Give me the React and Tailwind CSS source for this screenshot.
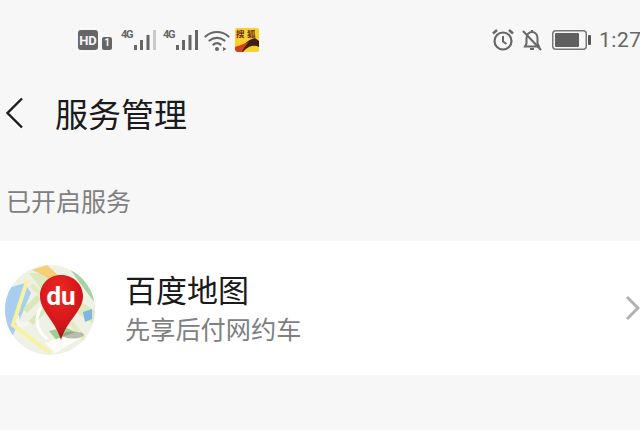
const cjk = { fontFamily: '"Noto Sans CJK SC", "Noto Sans", sans-serif' };

function Signal({ full }) {
  return (
    <svg width="35" height="26" viewBox="0 0 35 26" className="block">
      <text x="0" y="11" fontSize="11" fontWeight="700" fill="#666" fontFamily="Roboto, sans-serif" textLength="12.5">4G</text>
      <rect x="13" y="18" width="3" height="5" fill="#666" />
      <rect x="19" y="13" width="3" height="10" fill="#666" />
      <rect x="25.5" y="8" width="3" height="15" fill="#666" />
      <rect x="32" y="3" width="3" height="20" fill={full ? "#666" : "#c9c9c9"} />
    </svg>
  );
}

function MapIcon() {
  return (
    <svg width="90" height="90" viewBox="0 0 90 90" className="mt-[4px] block shrink-0">
      <defs>
        <clipPath id="c"><circle cx="45" cy="45" r="45" /></clipPath>
        <radialGradient id="r" cx="45%" cy="28%" r="75%">
          <stop offset="0" stopColor="#ee2a22" />
          <stop offset="0.65" stopColor="#d3161b" />
          <stop offset="1" stopColor="#a31016" />
        </radialGradient>
      </defs>
      <g clipPath="url(#c)">
        <rect width="90" height="90" fill="#eff1e4" />
        <path d="M0 24 L20 18 L26 28 L8 70 L0 66Z" fill="#a8cdee" />
        <path d="M10 52 L14 50 L15 58 L23 56 L24 60 L12 63Z" fill="#f4f7f0" />
        <path d="M24 8 L44 8 L72 34 L90 46 L90 60 L60 40 L36 24Z" fill="#dde9bf" />
        <path d="M27 5 L42 0 L54 11 L44 14 L38 10Z" fill="#f5d077" />
        <path d="M62 0 L90 0 L90 38 L75 18Z" fill="#a5d3a3" />
        <path d="M22 16 L8 60 L45 88" stroke="#f7f2a2" strokeWidth="4" fill="none" />
        <path d="M26 20 L58 48 L84 80" stroke="#e3eac4" strokeWidth="5" fill="none" />
        <path d="M20 46 L34 32 M26 58 L40 44" stroke="#d9e8bb" strokeWidth="6" fill="none" />
        <path d="M36 42 Q26 60 42 74" stroke="#fff" strokeWidth="3" fill="none" />
        <path d="M44 66 L60 62 L72 68 L54 78Z" fill="#9bcf93" />
        <path d="M78 47 L87 44 L87 54 L80 57Z" fill="#7fb6e4" />
        <path d="M40 78 L74 66 L78 72 L50 88Z" fill="#fdfdf8" />
        <ellipse cx="68" cy="70" rx="11" ry="3.5" fill="#8f8f82" opacity="0.6" />
      </g>
      <path d="M56 10 C43 10 35 20 35 31 C35 46 50 55 56 75 C62 55 78 46 78 31 C78 20 69 10 56 10Z" fill="url(#r)" />
      <text x="56" y="40" textAnchor="middle" fontSize="26" fontWeight="700" fill="#fff" fontFamily="Roboto, sans-serif">du</text>
    </svg>
  );
}

export default function App() {
  return (
    <div className="h-[430px] w-[640px] overflow-hidden bg-[#f7f7f7]" style={cjk}>
      <div className="flex h-[80px] items-center justify-between pl-[78px] text-[#666]">
        <div className="flex items-center">
          <div className="flex h-[20px] w-[20px] items-center justify-center rounded-[3px] bg-[#666] text-[13px] font-bold leading-none text-[#f7f7f7] font-['Roboto']">HD</div>
          <div className="ml-[4px] mt-[6px] flex h-[13px] w-[10px] items-center justify-center rounded-[2px] bg-[#666] text-[10px] font-bold leading-none text-[#f7f7f7] font-['Roboto']">1</div>
          <div className="ml-[9px]"><Signal /></div>
          <div className="ml-[7px]"><Signal full /></div>
          <svg width="26" height="24" viewBox="0 0 26 24" className="ml-[6px] block" fill="none" stroke="#666" strokeWidth="2.2" strokeLinecap="round">
            <path d="M1.5 8.5 C8 2.5 18 2.5 24.5 8.5" />
            <path d="M5.5 12.5 C10 9 16 9 20.5 12.5" />
            <path d="M9.5 16.5 C11.5 15 14.5 15 16.5 16.5" />
            <circle cx="13" cy="21" r="2" fill="#666" stroke="none" />
            <path d="M19 19 L19 23 L22.5 21Z" fill="#666" stroke="none" />
          </svg>
          <svg width="24" height="24" viewBox="0 0 24 24" className="ml-[5px] block">
            <rect width="24" height="24" rx="2" fill="#f7d22e" />
            <path d="M2 22 C8 18 13 11 20 10 L24 13 L24 19 C18 16 12 19 8 24 L3 24Z" fill="#3f1f10" />
            <path d="M0 19 L14 14 C10 18 8 21 7 24 L2 24 L0 22Z" fill="#d8401c" />
            <text x="1" y="9" fontSize="8.5" fontWeight="700" fill="#6b2a10">搜</text>
            <text x="12" y="9" fontSize="8.5" fontWeight="700" fill="#6b2a10">狐</text>
          </svg>
        </div>
        <div className="flex items-center">
          <svg width="24" height="24" viewBox="0 0 24 24" className="block" fill="none" stroke="#666" strokeWidth="2.2">
            <circle cx="12" cy="13" r="8.5" />
            <path d="M12 8 V13.5 L15.5 16" strokeWidth="2" />
            <path d="M2 5.5 L6 2 M22 5.5 L18 2" strokeWidth="2.4" />
          </svg>
          <svg width="24" height="24" viewBox="0 0 24 24" className="ml-[5px] block" fill="none" stroke="#666" strokeWidth="2">
            <path d="M5 18.5 L6.5 15.5 V10 C6.5 6.5 9 4 12 4 C15 4 17.5 6.5 17.5 10 V15.5 L19 18.5Z" />
            <path d="M10 21 H14 M12 2 V4" />
            <path d="M3 3 L21 22" />
          </svg>
          <svg width="40" height="20" viewBox="0 0 40 20" className="ml-[8px] block">
            <rect x="0.75" y="0.75" width="33.5" height="18.5" rx="3" fill="none" stroke="#777" strokeWidth="1.5" />
            <rect x="3" y="3" width="24" height="14" rx="1" fill="#5f5f5f" />
            <rect x="36" y="5" width="3" height="10" rx="1" fill="#555" />
          </svg>
          <span className="ml-[7px] w-[41px] shrink-0 text-[21px] leading-none font-['Roboto'] tracking-[0.5px]">1:27</span>
        </div>
      </div>
      <div className="flex h-[70px] items-center">
        <svg width="24" height="32" viewBox="0 0 24 32" className="mb-[4px] ml-[2px] block" fill="none" stroke="#1c1c1c" strokeWidth="2.4">
          <path d="M20 1.5 L5.5 16 L20 30.5" />
        </svg>
        <h1 className="ml-[29px] pb-[4px] text-[33px] font-normal leading-none text-[#1a1a1a]">服务管理</h1>
      </div>
      <div className="h-[91px] pl-[6px] pt-[34px] text-[25px] leading-[32px] text-[#808080]">已开启服务</div>
      <div className="flex h-[134px] items-center bg-white pl-[5px]">
        <MapIcon />
        <div className="ml-[30px] flex-1 pb-[2px]">
          <div className="text-[31px] leading-[40px] text-[#1a1a1a]">百度地图</div>
          <div className="mt-[2px] text-[25.2px] leading-[34px] text-[#808080]">先享后付网约车</div>
        </div>
        <svg width="20" height="28" viewBox="0 0 20 28" className="mr-[-4px] block" fill="none" stroke="#b2b2b2" strokeWidth="3">
          <path d="M3 3 L14 14 L3 25" />
        </svg>
      </div>
    </div>
  );
}
